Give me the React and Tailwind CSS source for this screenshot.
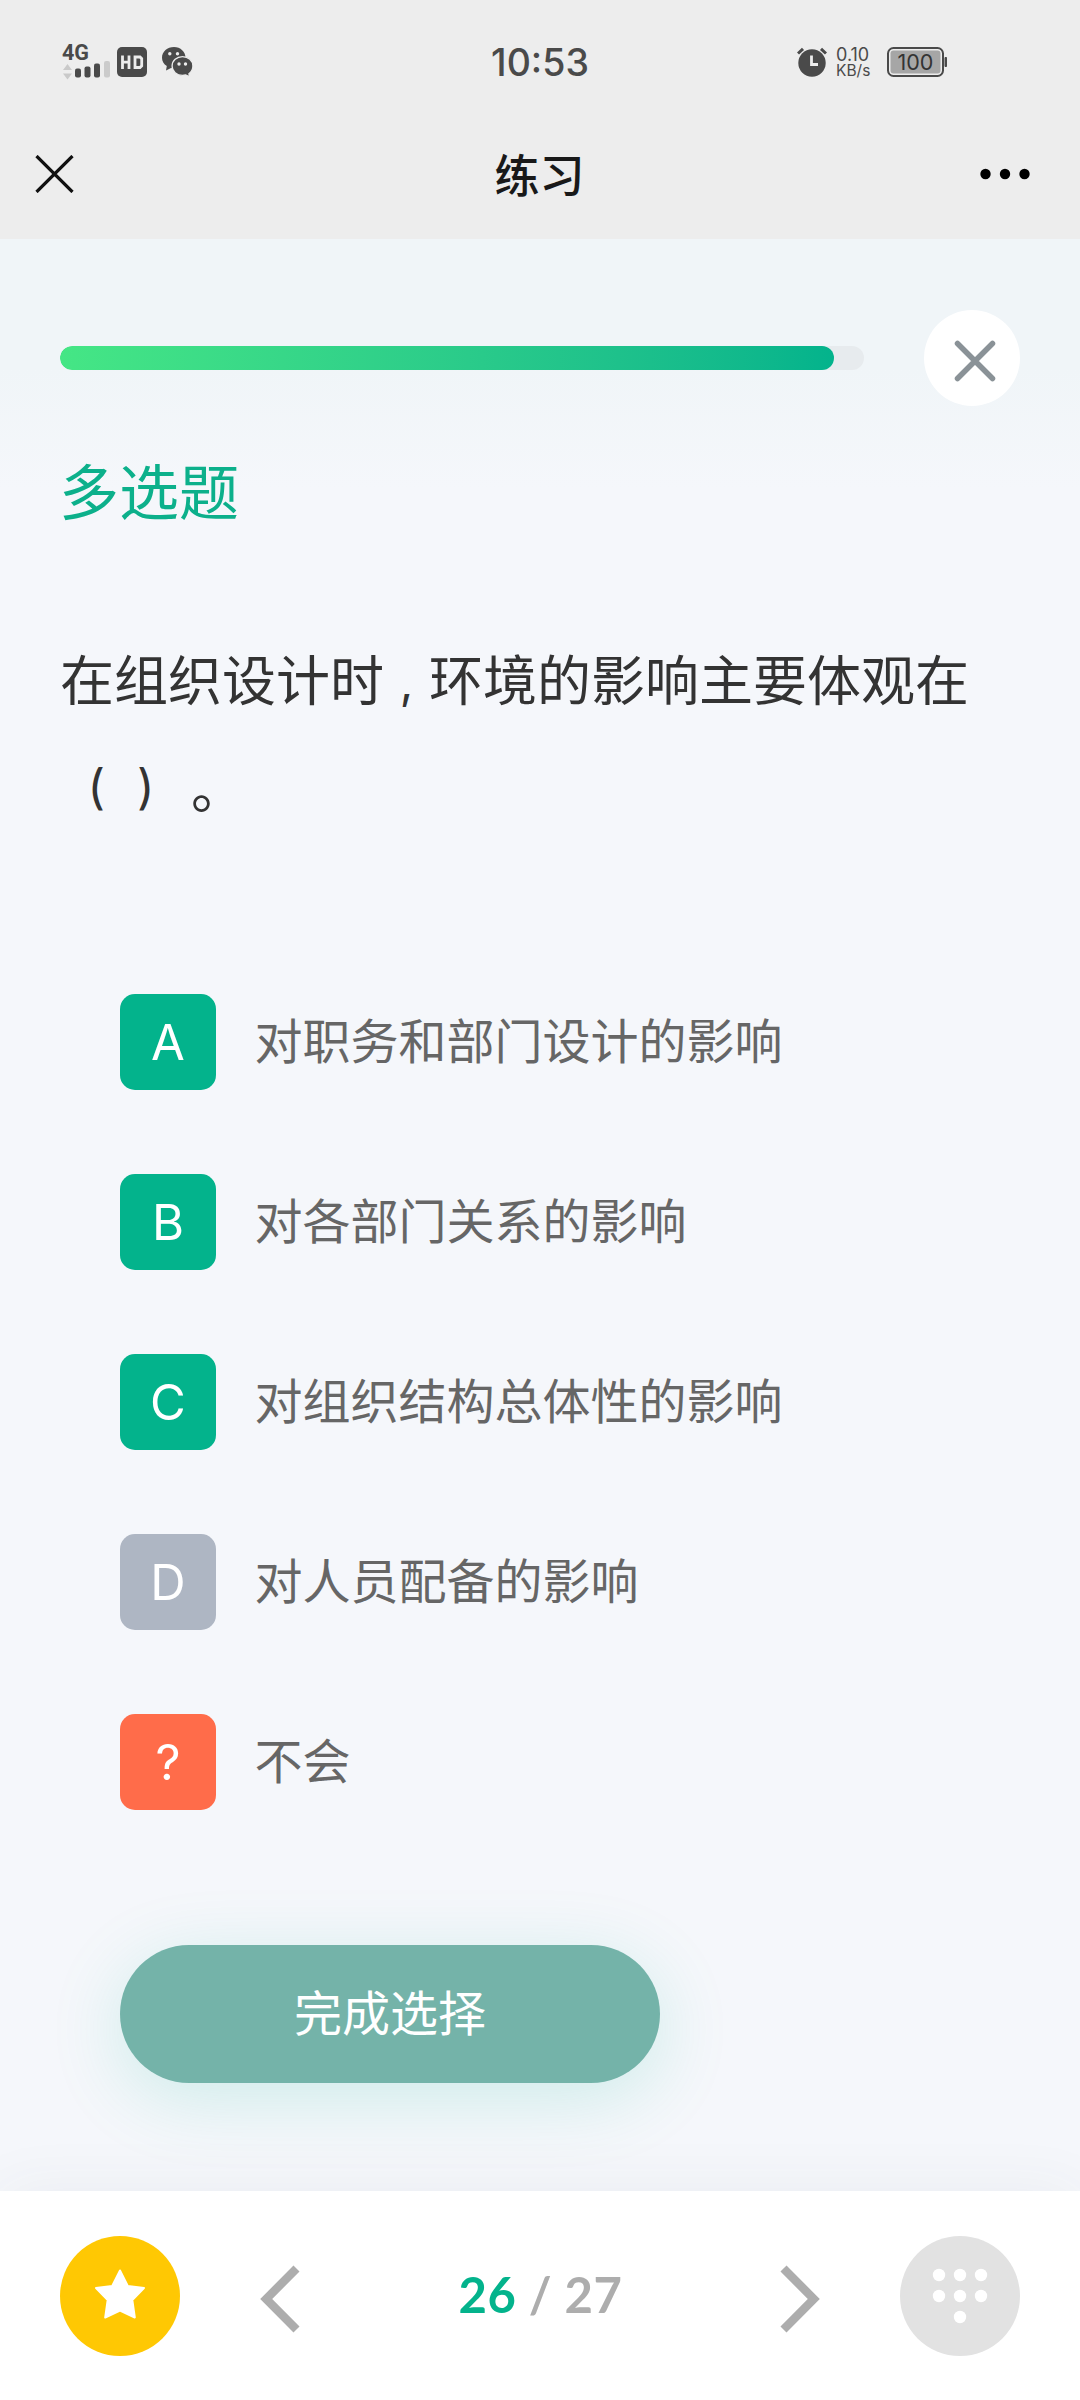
import { useState } from 'react';

const OPTIONS = [
  { key: 'A', text: '对职务和部门设计的影响' },
  { key: 'B', text: '对各部门关系的影响' },
  { key: 'C', text: '对组织结构总体性的影响' },
  { key: 'D', text: '对人员配备的影响' },
  { key: '?', text: '不会' },
];

function SignalIcon() {
  return (
    <div className="flex w-12 flex-col">
      <div className="h-[17px] font-['Roboto',sans-serif] text-[21.500px] leading-[17px] font-bold text-[#4a4a4a]">4G</div>
      <svg width="48" height="19" viewBox="0 15 48 19" className="block">
        <path d="M5.500 18l4.500 6H1zM5.500 33.500L1 27.500h9z" fill="#c9c9c9" />
        <rect x="13" y="22.500" width="6" height="9" rx="2" fill="#4a4a4a" />
        <rect x="22.500" y="20.500" width="6" height="11" rx="2" fill="#4a4a4a" />
        <rect x="32" y="17.500" width="6" height="14" rx="2" fill="#4a4a4a" />
        <rect x="42" y="15" width="6" height="16.500" rx="2" fill="#cbcbcb" />
      </svg>
    </div>
  );
}

function HdIcon() {
  return (
    <svg width="30" height="30" viewBox="0 0 30 30" className="block">
      <rect width="30" height="30" rx="5" fill="#4a4a4a" />
      <path d="M5.500 8.500v13.500M12 8.500v13.500M5.500 15.200h6.500" stroke="#ececec" strokeWidth="2.800" fill="none" />
      <path d="M18 10h5l1.700 1.700v7.100l-1.700 1.700h-5z" stroke="#ececec" strokeWidth="2.800" fill="none" />
    </svg>
  );
}

function WechatIcon() {
  return (
    <svg width="32" height="30" viewBox="0 0 32 30" className="block">
      <path d="M12 0C5.300 0 0 4.700 0 10.700c0 3.400 1.800 6.300 4.800 8.300L4 23.500l5-2.500c1 .3 2 .3 3 .3 6.500 0 11.500-4.800 11.500-10.600S18.500 0 12 0z" fill="#4a4a4a" />
      <path d="M20.500 9.600c-5.800 0-10.400 4.100-10.400 9.400s4.600 9.400 10.400 9.400c1.100 0 2.200-.2 3.200-.5l4 2-.8-3.200c2.500-1.800 4-4.600 4-7.700 0-5.300-4.600-9.400-10.400-9.400z" fill="#4a4a4a" stroke="#ececec" strokeWidth="1.300" />
      <circle cx="7.800" cy="6.800" r="1.700" fill="#ececec" />
      <circle cx="15.500" cy="6.800" r="1.700" fill="#ececec" />
      <circle cx="17" cy="17" r="1.700" fill="#ececec" />
      <circle cx="23.500" cy="17" r="1.700" fill="#ececec" />
    </svg>
  );
}

function AlarmIcon() {
  return (
    <svg width="30" height="30" viewBox="0 0 30 30" className="block">
      <circle cx="15" cy="16" r="13.700" fill="#4a4a4a" />
      <path d="M1 6.500l5-4.700M29 6.500l-5-4.700" stroke="#4a4a4a" strokeWidth="3" />
      <path d="M14.500 8.500v9h6.500" stroke="#ececec" strokeWidth="2.800" fill="none" />
    </svg>
  );
}

function BatteryIcon() {
  return (
    <svg width="61" height="30" viewBox="0 0 61 30" className="block">
      <rect x="1" y="1" width="55" height="28" rx="5.500" fill="#ececec" stroke="#4a4a4a" strokeWidth="2" />
      <rect x="3.500" y="3.500" width="50" height="23" rx="3" fill="#a6a6a6" />
      <path d="M58 10.500h1.500v9H58z" fill="#4a4a4a" stroke="#4a4a4a" />
      <text x="28.500" y="22.600" textAnchor="middle" fontSize="21.500" fill="#333" className="font-['Inter',sans-serif]">100</text>
    </svg>
  );
}

function StatusBar() {
  return (
    <div className="grid h-28 grid-cols-[1fr_148px_1fr] items-center pt-3">
      <div className="flex items-center pl-[62px]">
        <SignalIcon />
        <div className="ml-[7px]"><HdIcon /></div>
        <div className="ml-[15px]"><WechatIcon /></div>
      </div>
      <div className="pt-0.5 text-center font-['Inter',sans-serif] text-[37.500px] leading-none font-medium text-[#4a4a4a]">10:53</div>
      <div className="flex items-center justify-end pr-[132px]">
        <AlarmIcon />
        <div className="ml-[9px] w-9 pt-0.5 font-['Inter',sans-serif] text-[#4a4a4a]">
          <div className="text-[18px] leading-4">0.10</div>
          <div className="text-[15.500px] leading-4">KB/s</div>
        </div>
        <div className="ml-[15px]"><BatteryIcon /></div>
      </div>
    </div>
  );
}

function NavBar() {
  return (
    <div className="flex h-[127px] items-center justify-between pr-[50px] pb-1 pl-[35px]">
      <svg width="39" height="38" viewBox="0 0 39 38" fill="none" stroke="#111" strokeWidth="3.200">
        <path d="M1.500 1l36 36M37.500 1l-36 36" />
      </svg>
      <h1 className="ml-[25px] text-[45px] leading-none font-medium text-[#191919]">练习</h1>
      <svg width="50" height="12" viewBox="0 0 50 12" fill="#000">
        <circle cx="5.500" cy="6" r="5.200" />
        <circle cx="25" cy="6" r="5.200" />
        <circle cx="44.500" cy="6" r="5.200" />
      </svg>
    </div>
  );
}

function Option({ option, color, onClick }) {
  return (
    <button onClick={onClick} className="flex h-24 items-center gap-[38.500px] text-left">
      <span className={`flex size-24 items-center justify-center rounded-[15px] font-['Inter',sans-serif] text-[49px] leading-none font-normal text-white ${color}`}>
        {option.key}
      </span>
      <span className="pb-[9px] text-[48px] leading-none text-[#666]">{option.text}</span>
    </button>
  );
}

export default function App() {
  const [selected, setSelected] = useState(['A', 'B', 'C']);
  const current = 26;
  const total = 27;

  const toggle = (key) => {
    setSelected(prev => prev.includes(key) ? prev.filter(k => k !== key) : [...prev, key]);
  };

  const colorOf = (key) => {
    if (key === '?') return 'bg-[#ff6c4a]';
    return selected.includes(key) ? 'bg-[#03b38c]' : 'bg-[#aeb6c3]';
  };

  return (
    <div className="flex h-[2400px] w-[1080px] flex-col overflow-hidden bg-[#f5f7fb] font-['Noto_Sans_CJK_SC',sans-serif]">
      <header className="h-[239px] bg-[#ededed]">
        <StatusBar />
        <NavBar />
      </header>

      <main className="flex-1 bg-[linear-gradient(to_bottom,#f0f5f8_0px,#f0f5f8_130px,#f5f7fb_250px)] px-[60px] pt-[71px]">
        {/* Progress */}
        <div className="flex items-center justify-between">
          <div className="h-6 w-[804px] overflow-hidden rounded-full bg-[#e7ebee]">
            <div
              className="h-full rounded-full bg-linear-to-r from-[#45e685] to-[#03b38c]"
              style={{ width: `${(current / total) * 100}%` }}
            />
          </div>
          <button className="flex size-24 items-center justify-center rounded-full bg-white pt-[5px] pl-[5px]">
            <svg width="42" height="42" viewBox="0 0 42 42" fill="none" stroke="#8a9297" strokeWidth="5.500" strokeLinecap="round">
              <path d="M3.500 3.500l35 35M38.500 3.500l-35 35" />
            </svg>
          </button>
        </div>

        {/* Question */}
        <h2 className="mt-[53px] -ml-px text-[60px] leading-[60px] text-[#0cb08b]">多选题</h2>
        <p className="mt-[105px] text-[54px] leading-[108px] text-[#333]">
          在组织设计时<span className="inline-block w-[45px] text-center align-[2px] font-['Inter',sans-serif] text-[47px] leading-none">,</span>环境的影响主要体观在<br />
          <span className="font-['Inter',sans-serif] text-[48px] leading-none">
            <span className="inline-block w-[54px] pr-[9px] text-right align-[5px]">(</span>
            <span className="inline-block w-[77px] pl-[23px] text-left align-[5px]">)</span>
          </span>。
        </p>

        {/* Answers */}
        <div className="mt-[154px] flex flex-col gap-[84px] pl-[60px]">
          {OPTIONS.map(option => (
            <Option key={option.key} option={option} color={colorOf(option.key)} onClick={() => toggle(option.key)} />
          ))}
        </div>

        <button className="mt-[135px] ml-[60px] flex h-[138px] w-[540px] items-center justify-center rounded-full bg-[#74b3a9] pb-2 text-[48px] leading-none text-white shadow-[0_15px_75px_rgba(3,179,140,0.16)]">
          完成选择
        </button>
      </main>

      <footer className="flex h-[209px] items-center justify-between bg-white px-[60px] shadow-[0_0_60px_rgba(60,60,90,0.06)]">
        <button className="flex size-[120px] items-center justify-center rounded-full bg-[#ffc803] pb-1">
          <svg width="50" height="50" viewBox="0 0 50 50" fill="#fff" stroke="#fff" strokeWidth="2" strokeLinejoin="round">
            <path d="M25 1.500l7.800 15.500 16.200 2-11.700 12 2.500 17.500L25 41.500l-14.800 7 2.500-17.500L1 19l16.200-2z" />
          </svg>
        </button>
        <svg width="40" height="68" viewBox="0 0 40 68" fill="none" stroke="#adadad" strokeWidth="8.500" strokeLinejoin="miter" className="mt-[7px]">
          <path d="M36.500 3.500L6.200 34l30.300 30.500" />
        </svg>
        <div className="mx-[78px] pb-0.5 pl-px font-['Lato',sans-serif] text-[49px] leading-none font-bold tracking-[0.5px] whitespace-pre text-[#adadad]">
          <span className="text-[#03b38c]">{current}</span> / {total}
        </div>
        <svg width="40" height="68" viewBox="0 0 40 68" fill="none" stroke="#adadad" strokeWidth="8.500" strokeLinejoin="miter" className="mt-[7px]">
          <path d="M3.500 3.500L33.800 34 3.500 64.500" />
        </svg>
        <button className="flex size-[120px] items-center justify-center rounded-full bg-[#e2e2e2]">
          <svg width="56" height="56" viewBox="0 0 56 56" fill="#fff">
            <circle cx="7" cy="7" r="6.200" />
            <circle cx="28" cy="7" r="6.200" />
            <circle cx="49" cy="7" r="6.200" />
            <circle cx="7" cy="28" r="6.200" />
            <circle cx="28" cy="28" r="6.200" />
            <circle cx="49" cy="28" r="6.200" />
            <circle cx="28" cy="49" r="6.200" />
          </svg>
        </button>
      </footer>
    </div>
  );
}
